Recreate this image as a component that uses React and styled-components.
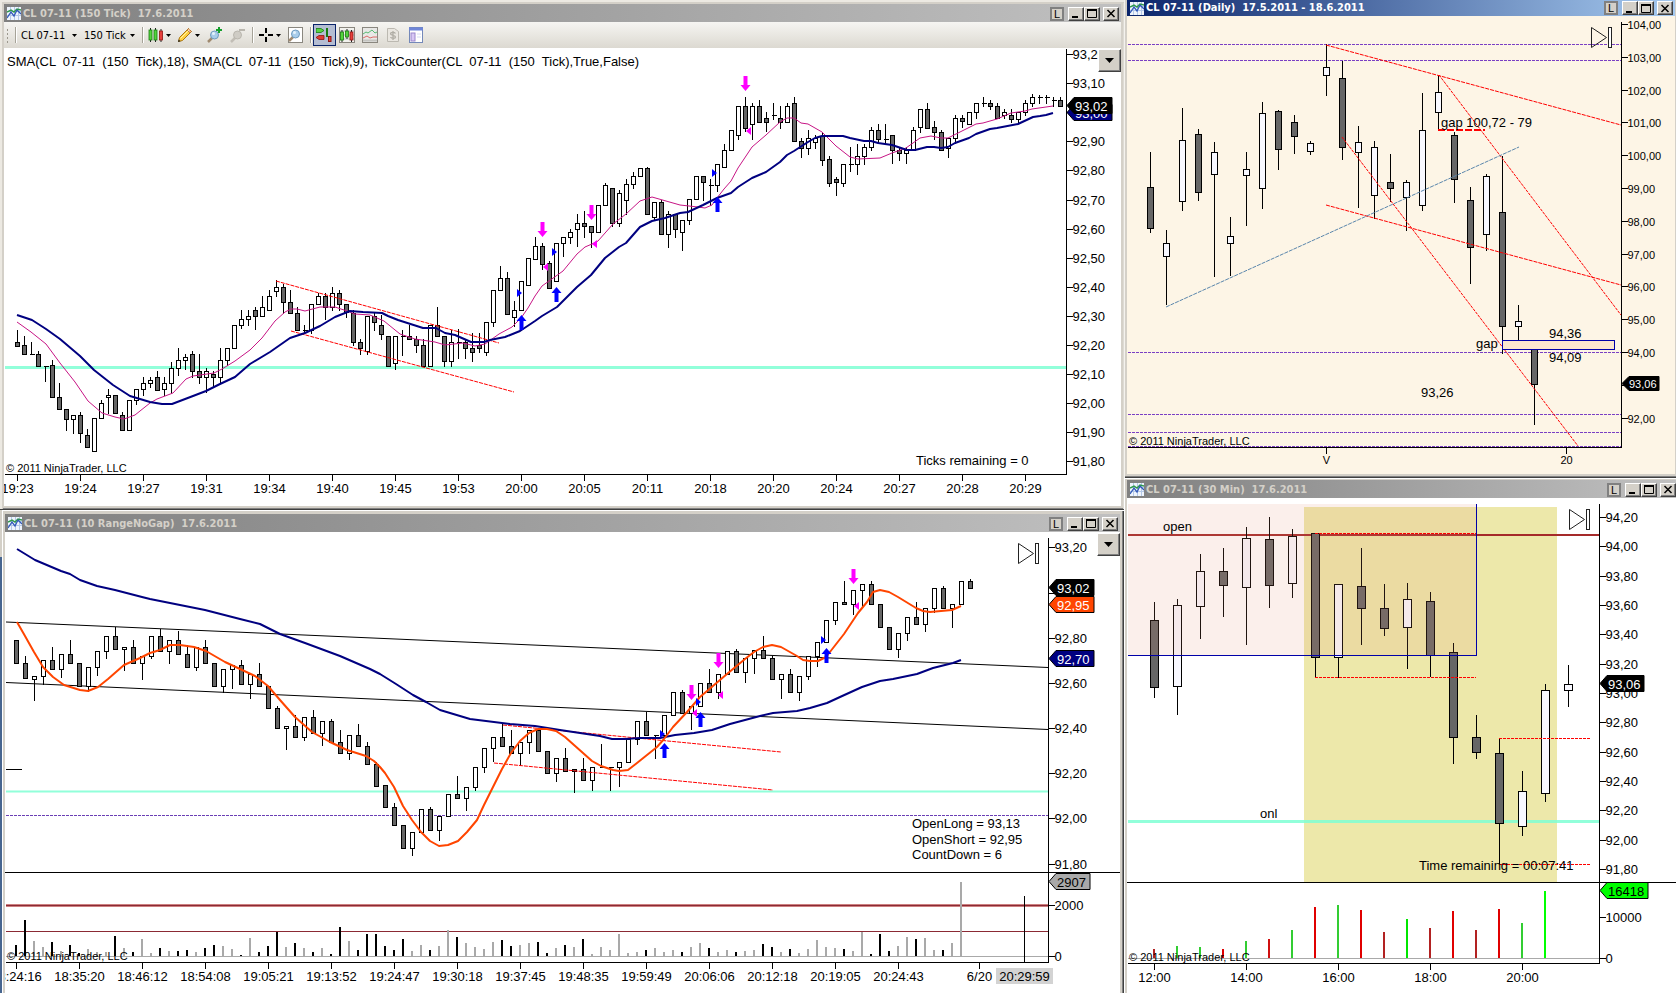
import React from "react";
import styled, { createGlobalStyle, css } from "styled-components";

const GlobalStyle = createGlobalStyle`
  * { box-sizing: border-box; }
  body { margin: 0; background: #d4d0c8; font-family: "DejaVu Sans Condensed", "Noto Sans", sans-serif; font-size: 11px; color: #000; }
  button, select { font: inherit; color: #000; margin: 0; }
`;

/* ---------- window chrome ---------- */

const Desktop = styled.main`
  display: grid;
  grid-template-columns: 1124fr 552fr;
  align-items: start;
  min-height: 100vh;
`;

const Column = styled.div`
  display: flex;
  flex-direction: column;
  min-width: 0;
`;

const Backdrop = styled.div`
  padding-left: 2px;
  background: linear-gradient(#d4d0c8 47px, #47658f 47px);
`;

const Frame = styled.section`
  display: flex;
  flex-direction: column;
  background: #d4d0c8;
  ${({ $kind }) =>
    ({
      tick: css`padding: 4px 3px 4px 4px; box-shadow: inset 0 -1px #404040, inset 2px 2px #ece9e2, inset 3px 3px #d4d0c8, inset -1px 0 #dedbd4, inset 0 -2px #808080;`,
      range: css`padding: 4px 4px 0 3px; box-shadow: inset 1px 1px #ffffff, inset -1px 0 #404040, inset -2px 0 #808080;`,
      daily: css`padding: 0 1px 4px 3px; box-shadow: inset 1px 0 #f4f2ee, inset 0 -1px #404040, inset 0 -2px #808080;`,
      minute: css`padding: 2px 0 0 3px; box-shadow: inset 1px 1px #ffffff;`,
    })[$kind]}
`;

const TitleBar = styled.header`
  display: flex;
  align-items: center;
  gap: 2px;
  height: ${({ $short }) => ($short ? 16 : 18)}px;
  padding: ${({ $short }) => ($short ? 0 : 1)}px ${({ $end }) => $end}px 0 3px;
  color: ${({ $active }) => ($active ? "#fff" : "#d4d0c8")};
  background: ${({ $active }) =>
    $active
      ? "linear-gradient(90deg, #0a246a, #a6caf0)"
      : "linear-gradient(90deg, #808080, #c0c0c0)"};
`;

const Title = styled.h2`
  flex: 1;
  margin: 0;
  font-size: 11px;
  line-height: 16px;
  font-weight: 700;
  white-space: pre;
  overflow: hidden;
`;

const CaptionButtons = styled.div`
  display: flex;
  align-items: center;
`;

const CaptionButton = styled.button`
  display: grid;
  place-items: center;
  width: ${({ $small }) => ($small ? 14 : 16)}px;
  height: 14px;
  padding: 0;
  margin-left: ${({ $gap }) => $gap || 0}px;
  border: 1px solid;
  border-color: #fff #404040 #404040 #fff;
  background: #d4d0c8;
  box-shadow: inset -1px -1px #808080;
  ${({ $small }) =>
    $small &&
    css`
      border: 2px solid #808080;
      box-shadow: none;
      font: 11px/10px "Liberation Sans", sans-serif;
    `}
`;

const ChartArea = styled.div`
  position: relative;
`;

const ChartSvg = styled.svg`
  display: block;
  width: 100%;
  height: auto;
  background: ${({ $tint }) => $tint || "#fff"};
`;

const MenuButton = styled.button`
  position: absolute;
  top: 1px;
  right: 0;
  display: grid;
  place-items: center;
  width: 23px;
  height: 23px;
  padding: 0;
  border: 1px solid;
  border-color: #fff #404040 #404040 #fff;
  background: #d4d0c8;
  box-shadow: inset -1px -1px #808080;
`;

/* ---------- toolbar ---------- */

const Toolbar = styled.div`
  display: flex;
  align-items: center;
  height: 26px;
  background: linear-gradient(#f6f5f2, #dcd9d1);
`;

const Grip = styled.span`
  width: 8px;
  height: 15px;
  background: radial-gradient(circle, #9c988e 1px, transparent 1px) 2px 0 / 3px 4px repeat-y;
`;

const Separator = styled.span`
  width: 6px;
  height: 16px;
  border-left: 3px solid transparent;
  background: linear-gradient(90deg, #a6a398 1px, #fff 1px, #fff 2px, transparent 2px) no-repeat padding-box;
`;

const Picker = styled.label`
  display: flex;
  align-items: center;
  width: ${({ $wide }) => ($wide ? 63 : 58)}px;
  padding: 0 4px 0 3px;
`;

const PickerSelect = styled.select`
  flex: 1;
  min-width: 0;
  padding: 0;
  border: 0;
  outline: 0;
  background: transparent;
  appearance: none;
`;

const ToolButton = styled.button`
  display: flex;
  align-items: center;
  gap: 2px;
  width: ${({ $menu }) => ($menu ? 29 : 23)}px;
  height: 22px;
  padding: 0 0 0 2px;
  border: 1px solid ${({ $pressed }) => ($pressed ? "#0a246a" : "transparent")};
  background: ${({ $pressed }) => ($pressed ? "#b4bdd2" : "transparent")};
`;

const Caret = () => (
  <svg width="5" height="3" viewBox="0 0 5 3" aria-hidden="true">
    <path d="M0 0h5L2.500 3z" fill="#000" />
  </svg>
);

const Icon = ({ children }) => (
  <svg width="16" height="16" viewBox="0 0 16 16" aria-hidden="true">
    {children}
  </svg>
);

const Lens = ({ faded, x = 0, y = 0 }) => (
  <g transform={`translate(${x} ${y})`}>
    <path d="M2 14l5-5" stroke={faded ? "#c2beb6" : "#a08a70"} strokeWidth="2.500" />
    <circle cx="8.500" cy="7" r="4" fill={faded ? "#cfccc5" : "#a9cdea"} stroke={faded ? "#b9b6ae" : "#6f9cc0"} />
    {!faded && <circle cx="7.500" cy="5.500" r="1.500" fill="#e4f2fc" />}
  </g>
);

const Bar = ({ x, y, h, up }) => (
  <g>
    <path d={`M${x + 1.5} ${y - 2}v${h + 4}`} stroke="#222" />
    <rect x={x} y={y} width="3" height={h} fill={up ? "#52d43c" : "#e8403c"} stroke={up ? "#187a10" : "#8e1512"} strokeWidth="0.800" />
  </g>
);

const StyleIcon = () => (
  <Icon>
    <Bar x={1} y={3} h={10} up />
    <Bar x={6} y={3} h={10} up />
    <Bar x={11.5} y={4} h={9} />
  </Icon>
);

const PencilIcon = () => (
  <Icon>
    <path d="M1.500 14.500l1-4L11.500 1.500l3 3L5.500 13.500z" fill="#ffd040" stroke="#a97512" />
    <path d="M11.500 1.500l3 3-1.500 1.500-3-3z" fill="#f0a8a0" stroke="#a97512" strokeWidth="0.700" />
    <path d="M3.500 11.500l9-9" stroke="#fff2a8" />
    <path d="M1 15l2.500-.7-1.800-1.800z" fill="#222" />
  </Icon>
);

const ZoomInIcon = () => (
  <Icon>
    <Lens y={1} />
    <path d="M13 0v6M10 3h6" stroke="#14a02c" strokeWidth="2" />
  </Icon>
);

const ZoomOutIcon = () => (
  <Icon>
    <Lens y={1} faded />
    <path d="M10 3h6" stroke="#b9b6ae" strokeWidth="2" />
  </Icon>
);

const CrosshairIcon = () => (
  <Icon>
    <path d="M8 1v5M8 10v5M1 8h5M10 8h5" stroke="#000" strokeWidth="2" />
  </Icon>
);

const PageIcon = () => (
  <Icon>
    <rect x="1.500" y=".5" width="14" height="15" fill="#fff" stroke="#8a877f" />
    <Lens />
  </Icon>
);

const TraderIcon = () => (
  <Icon>
    <path d="M0 1.500h5l3 2-3 2H0z" fill="#58d444" stroke="#187a10" strokeWidth="0.800" />
    <path d="M8 8.500H3l-3 2 3 2h5z" fill="#e03c34" stroke="#8e1512" strokeWidth="0.800" />
    <path d="M11 1v9" stroke="#187a10" strokeWidth="2" />
    <rect x="12.500" y="9.500" width="2.500" height="5" fill="#e8403c" stroke="#8e1512" />
  </Icon>
);

const DataIcon = () => (
  <Icon>
    <rect x=".5" y=".5" width="15" height="15" fill="#f2f2ee" stroke="#8a877f" />
    <path d="M1 4h14M1 8h14M1 12h14" stroke="#9aa0a8" strokeWidth="0.700" />
    <Bar x={1.5} y={5} h={8} up />
    <Bar x={6.5} y={4} h={6} up />
    <Bar x={11} y={5} h={8} />
  </Icon>
);

const IndicatorIcon = () => (
  <Icon>
    <rect x=".5" y=".5" width="15" height="15" fill="#e8e8e6" stroke="#8a877f" />
    <path d="M1 7l3-2 2 1 4-3 3 3 2-1" fill="none" stroke="#35ad55" strokeWidth="0.800" />
    <path d="M1 11l4-2 3 2 3-1 4 0" fill="none" stroke="#d64a48" strokeWidth="0.800" />
    <path d="M1 13.500h14" stroke="#c4c4c0" strokeWidth="2" />
  </Icon>
);

const StrategyIcon = () => (
  <Icon>
    <path d="M2.500 1.500h7l4 3v10h-11z" fill="#e9e6e0" stroke="#bcb9b1" />
    <path d="M10.500 6.500c-1-1.500-5-1.500-5 .3 0 2 5 1 5 3.200 0 1.800-4 1.800-5 .2M8 4v9" fill="none" stroke="#b0ada5" strokeWidth="1.300" />
  </Icon>
);

const PropertiesIcon = () => (
  <Icon>
    <rect x="1.500" y=".5" width="13" height="15" fill="#fff" stroke="#7488b8" />
    <path d="M1 2h14" stroke="#6f86d8" strokeWidth="3" />
    <rect x="3" y="6" width="4" height="8" fill="#d8c8f4" stroke="#9a86cc" />
    <path d="M9 7h4M9 10h4" stroke="#d4dcf2" />
  </Icon>
);

const ChartToolbar = () => (
  <Toolbar role="toolbar" aria-label="Chart tools">
    <Grip />
    <Separator />
    <Picker $wide>
      <PickerSelect aria-label="Instrument">
        <option>CL 07-11</option>
      </PickerSelect>
      <Caret />
    </Picker>
    <Picker>
      <PickerSelect aria-label="Period">
        <option>150 Tick</option>
      </PickerSelect>
      <Caret />
    </Picker>
    <Separator />
    <ToolButton $menu aria-label="Chart style"><StyleIcon /><Caret /></ToolButton>
    <ToolButton $menu aria-label="Drawing tools"><PencilIcon /><Caret /></ToolButton>
    <ToolButton aria-label="Zoom in"><ZoomInIcon /></ToolButton>
    <ToolButton aria-label="Zoom out" disabled><ZoomOutIcon /></ToolButton>
    <Separator />
    <ToolButton $menu aria-label="Crosshair"><CrosshairIcon /><Caret /></ToolButton>
    <ToolButton aria-label="Zoom frame"><PageIcon /></ToolButton>
    <Separator />
    <ToolButton $pressed aria-label="Chart trader"><TraderIcon /></ToolButton>
    <ToolButton aria-label="Data series"><DataIcon /></ToolButton>
    <ToolButton aria-label="Indicators"><IndicatorIcon /></ToolButton>
    <ToolButton aria-label="Strategies" disabled><StrategyIcon /></ToolButton>
    <ToolButton aria-label="Properties"><PropertiesIcon /></ToolButton>
  </Toolbar>
);

const ChartMark = () => (
  <svg width="14" height="13" viewBox="0 0 14 13" aria-hidden="true">
    <rect width="14" height="13" fill="#eef4fc" />
    <path d="M0 4.500h14M0 8.500h14M3.500 0v13M7.500 0v13M11.500 0v13" stroke="#b4c8e8" />
    <path d="M0 5l4-2 3 2 3-3 4 1" fill="none" stroke="#2e9a4a" strokeWidth="1.500" />
    <path d="M0 11l4-6 3 4 3-6 4 4" fill="none" stroke="#3058b8" strokeWidth="1.300" />
  </svg>
);

const WindowTitle = ({ text, active, short, end = 4 }) => (
  <TitleBar $active={active} $short={short} $end={end}>
    <ChartMark />
    <Title>{text}</Title>
    <CaptionButtons>
      <CaptionButton $small aria-label="Link">L</CaptionButton>
      <CaptionButton $gap={4} aria-label="Minimize">
        <svg width="10" height="9"><path d="M1 8h6" stroke="#000" strokeWidth="2" /></svg>
      </CaptionButton>
      <CaptionButton aria-label="Maximize">
        <svg width="10" height="9"><path d="M.5 1h9M.5 0v8.500h9V0" fill="none" stroke="#000" /><path d="M0 1h10" stroke="#000" strokeWidth="2" /></svg>
      </CaptionButton>
      <CaptionButton $gap={3} aria-label="Close">
        <svg width="10" height="9"><path d="M1.500 1l7 7M8.500 1l-7 7" stroke="#000" strokeWidth="1.500" /></svg>
      </CaptionButton>
    </CaptionButtons>
  </TitleBar>
);

/* ---------- chart primitives ---------- */

const ChartText = styled.text`
  font-family: "Liberation Sans", Arial, sans-serif;
  font-size: ${({ $small }) => ($small ? 11 : 13)}px;
  fill: ${({ $color }) => $color || "#000"};
  white-space: pre;
`;

const Crisp = styled.g`
  shape-rendering: crispEdges;
`;

const Dashed = styled.line`
  stroke: ${({ $color }) => $color || "#ff0000"};
  stroke-width: ${({ $weight }) => $weight || 1}px;
  stroke-dasharray: ${({ $dash }) => $dash || "4 1"};
`;

const LevelLine = styled.line`
  stroke: #7fffd4;
  stroke-width: ${({ $weight }) => $weight}px;
  opacity: 0.85;
`;

const Curve = styled.polyline`
  fill: none;
  stroke: ${({ $color }) => $color};
  stroke-width: ${({ $weight }) => $weight || 1}px;
  stroke-linejoin: round;
`;

// Each candle reads "kind high top bottom low"; kind is u (rising) or d (falling).
const Candles = ({ data, x0, step, half, hollow = "#fff" }) => (
  <Crisp stroke="#000">
    {data.trim().split(/\s*[;\n]\s*/).filter(Boolean).map((entry, i) => {
      const [kind, ...values] = entry.split(" ");
      const [high, top, bottom, low] = values.map(Number);
      const x = x0 + i * step;
      return (
        <g key={i}>
          <path d={`M${x} ${high}V${low + 1}`} />
          {top === bottom ? (
            <path d={`M${x - half} ${top + 0.5}h${half * 2 + 1}`} />
          ) : (
            <rect x={x - half} y={top + 0.5} width={half * 2} height={bottom - top} fill={kind === "d" ? "#666" : hollow} />
          )}
        </g>
      );
    })}
  </Crisp>
);

const Tag = ({ x, y, w, text, fill, color = "#fff", small }) => {
  const r = small ? 7 : 8;
  return (
    <g>
      <path d={`M${x} ${y}l7 -${r}h${w - 7}v${r * 2}h-${w - 7}z`} fill={fill} stroke="#000" />
      <ChartText $small={small} $color={color} x={x + (small ? 7 : 8)} y={y + (small ? 4 : 5)}>{text}</ChartText>
    </g>
  );
};

const SellArrow = ({ x, y }) => <path d={`M${x - 2} ${y}h4v9h3l-5 6-5-6h3z`} fill="#ff00ff" />;
const BuyArrow = ({ x, y }) => <path d={`M${x} ${y}l5 6h-3v9h-4v-9h-3z`} fill="#0000ff" />;
const EntryMark = ({ x, y }) => <path d={`M${x} ${y}l-5-4v8z`} fill="#0000ff" />;
const ExitMark = ({ x, y }) => <path d={`M${x} ${y}l5-4v8z`} fill="#ff00ff" />;

const Markers = ({ sells, buys, entries, exits }) => (
  <g>
    {sells.map(([x, y]) => <SellArrow key={x} x={x} y={y} />)}
    {buys.map(([x, y]) => <BuyArrow key={x} x={x} y={y} />)}
    {entries.map(([x, y]) => <EntryMark key={x} x={x} y={y} />)}
    {exits.map(([x, y]) => <ExitMark key={x} x={x} y={y} />)}
  </g>
);

const PriceAxis = ({ x, top, bottom, labels, small }) => (
  <g>
    <Crisp stroke="#000">
      <path d={`M${x} ${top}V${bottom}`} />
      {labels.map(([, y]) => <path key={y} d={`M${x} ${y}h6`} />)}
    </Crisp>
    {labels.map(([label, y]) => (
      <ChartText key={y} $small={small} x={x + 6} y={y + 4}>{label}</ChartText>
    ))}
  </g>
);

const TimeAxis = ({ y, from, to, labels, x0, step, small, drop = 18 }) => (
  <g>
    <Crisp stroke="#000">
      <path d={`M${from} ${y}H${to}`} />
      {labels.map((label, i) => <path key={label} d={`M${x0 + i * step} ${y}v6`} />)}
    </Crisp>
    {labels.map((label, i) => (
      <ChartText key={label} $small={small} textAnchor="middle" x={x0 + i * step} y={y + drop}>{label}</ChartText>
    ))}
  </g>
);

const SkipIcon = ({ x, y }) => (
  <g fill="none" stroke="#222">
    <path d={`M${x} ${y}v20l15-10z`} />
    <rect x={x + 17} y={y} width="3" height="20" fill="#fff" />
  </g>
);

const Copyright = ({ x, y }) => <ChartText $small x={x} y={y}>© 2011 NinjaTrader, LLC</ChartText>;

const scale = (labels, start, step) => labels.map((label, i) => [label, Math.round(start + i * step) + 0.5]);

/* ---------- 150 tick chart ---------- */

const TICK_CANDLES = `
d 330 342 346 346;d 336 345 354 354;u 342 354 354 354;d 351 354 366 366;u 366 366 366 381;d 360 365 397 397;d 383 397 409 409;d 409 409 419 430
u 415 415 419 433;d 412 415 433 442;d 429 435 447 447;u 418 418 451 451;u 400 403 418 418;u 389 395 397 413;d 395 395 413 413;d 412 415 430 430
u 400 400 430 430;u 389 389 400 404;u 377 383 389 395;u 377 380 383 387;d 371 377 390 390;u 377 383 389 395;u 362 368 383 393;u 348 360 368 375
u 354 357 360 369;d 351 354 371 377;d 354 371 377 383;u 368 371 377 392;d 371 374 377 387;u 348 360 377 383;u 348 348 360 365;u 325 325 348 348
u 310 319 325 328;u 310 316 319 325;d 307 310 316 329;u 296 307 316 316;u 290 296 310 310;u 280 287 291 296;d 284 287 302 313;d 290 302 313 313
d 307 313 330 330;u 325 330 330 333;u 304 304 330 333;u 293 296 304 304;d 293 296 307 319;u 287 293 307 310;d 290 293 304 310;d 304 304 312 317
d 310 313 342 345;d 339 342 348 354;u 316 316 351 354;d 313 316 322 330;d 315 325 334 339;d 336 336 366 366;u 336 336 363 369;u 330 336 336 355
d 325 336 339 339;d 336 339 345 352;d 339 345 366 366;u 325 325 366 366;d 307 325 336 336;d 336 336 361 366;u 330 342 361 366;u 329 342 342 358
d 339 342 348 358;d 333 348 352 361;d 333 345 348 352;u 322 322 352 355;u 290 290 322 326;u 266 278 290 290;d 272 278 314 314;u 301 310 317 326
u 281 281 310 310;u 258 258 285 285;u 237 246 259 259;d 243 246 264 269;d 261 263 288 288;u 243 243 281 281;u 237 237 243 256;u 229 232 237 243
u 214 223 229 246;d 211 223 226 237;d 226 226 232 247;u 205 205 232 232;u 183 185 205 205;d 188 188 223 226;u 190 193 223 226;u 179 184 200 214
u 172 176 184 188;u 168 168 176 176;d 167 168 214 214;u 202 202 217 220;d 200 202 234 234;u 211 214 234 247;d 214 214 229 237;u 220 220 232 250
u 199 199 220 224;u 176 176 199 199;d 176 176 182 200;u 179 185 185 205;u 164 164 185 191;u 144 150 167 167;u 130 130 150 150;u 106 106 135 139
d 97 106 128 131;u 103 106 124 139;d 100 106 122 122;d 112 118 122 131;u 103 115 115 119;d 106 118 122 128;u 103 106 122 122;d 97 103 141 141
d 138 141 148 157;u 130 138 148 154;u 135 138 142 148;d 133 136 160 165;d 156 159 183 186;d 177 179 182 195;u 164 164 183 186;u 147 164 164 171
u 144 156 164 174;u 144 147 156 164;u 127 130 147 150;d 124 130 139 143;u 124 139 139 144;d 135 135 150 163;d 147 150 153 160;u 147 150 153 163
u 127 130 150 150;u 109 109 127 132;d 103 109 128 128;d 121 127 132 139;d 130 132 150 150;u 138 138 148 157;u 115 118 138 143;d 115 118 121 127
u 112 112 124 124;u 103 103 112 118;u 97 103 103 106;d 100 103 106 109;d 103 106 118 118;u 109 112 115 118;d 109 115 119 122;u 112 112 119 122
u 100 103 112 115;u 94 97 103 106;u 95 97 97 103;u 95 97 97 103;u 97 100 100 106;d 97 100 106 106`;

const TICK_SMA_SLOW =
  "17,315 32,320 46,329 60,339 80,356 94,370 113,385 130,396 150,402 162,404 172,404 193,396 206,391 220,384 235,377 250,364 270,352 290,338 305,333 320,326 335,317 350,311 363,312 382,313 388,316 398,320 423,328 436,328 445,333 455,335 471,342 484,342 490,340 505,337 520,331 535,321 542,316 557,307 577,287 591,275 605,258 619,247 626,243 640,227 652,221 665,218 680,213 688,212 703,205 717,198 731,193 738,187 752,178 766,172 780,162 787,155 794,151 808,142 815,138 822,136 843,136 850,138 864,141 871,141 878,143 892,145 907,150 915,150 927,147 934,147 941,148 948,147 955,143 969,138 976,134 990,129 997,128 1018,124 1033,117 1040,116 1046,115 1053,113";

const TICK_SMA_FAST =
  "17,322 31,332 46,344 60,363 75,382 88,401 102,413 115,417 124,419 135,415 150,403 157,399 173,393 186,379 193,376 200,375 214,373 222,369 235,361 250,350 262,338 275,321 285,312 291,309 297,309 305,311 320,307 335,307 347,311 355,314 370,315 384,321 400,334 415,339 435,342 445,345 463,343 475,346 485,344 499,334 512,327 521,318 528,308 535,296 542,286 556,276 563,271 577,254 585,247 592,244 598,241 613,224 626,214 640,201 652,197 666,201 680,205 698,207 705,208 712,205 717,198 724,189 731,181 738,168 752,147 766,135 780,122 787,118 794,118 801,123 808,124 822,132 836,146 850,157 858,159 880,158 892,153 906,148 920,138 931,136 941,138 948,138 962,131 976,124 983,123 997,119 1011,113 1025,111 1032,109 1053,106";

const TickChart = () => (
  <ChartSvg viewBox="4 48 1117 458" role="img" aria-label="CL 07-11 150 tick chart">
    <LevelLine $weight={3} x1="5" x2="1066" y1="367.500" y2="367.500" />
    <Candles data={TICK_CANDLES} x0={17.5} step={7} half={2} />
    <Dashed x1="276" y1="281" x2="499" y2="343" />
    <Dashed x1="291" y1="331" x2="514" y2="392" />
    <Curve $color="#c71585" points={TICK_SMA_FAST} />
    <Curve $color="#000080" $weight={2} points={TICK_SMA_SLOW} />
    <Markers
      sells={[[542.5, 222], [591.5, 205], [745.5, 76]]}
      buys={[[521.5, 315], [556.5, 287], [717.5, 197]]}
      entries={[[522, 293], [557, 252], [717, 173]]}
      exits={[[543, 267], [592, 244], [746, 131]]}
    />
    <ChartText x="7" y="66">{"SMA(CL  07-11  (150  Tick),18),"}</ChartText>
    <ChartText x="193" y="66">{"SMA(CL  07-11  (150  Tick),9),"}</ChartText>
    <ChartText x="372" y="66">{"TickCounter(CL  07-11  (150  Tick),True,False)"}</ChartText>
    <ChartText x="916" y="465">Ticks remaining = 0</ChartText>
    <Copyright x={6} y={472} />
    <PriceAxis
      x={1066.5}
      top={49}
      bottom={475}
      labels={scale(["93,20", "93,10", "93,00", "92,90", "92,80", "92,70", "92,60", "92,50", "92,40", "92,30", "92,20", "92,10", "92,00", "91,90", "91,80"], 54, 29.1)}
    />
    <Tag x={1067} y={112.5} w={45} text="93,00" fill="#000080" />
    <Tag x={1067} y={105.5} w={45} text="93,02" fill="#000" />
    <TimeAxis
      y={474.5}
      from={5}
      to={1067}
      x0={17.5}
      step={63}
      labels={["19:23", "19:24", "19:27", "19:31", "19:34", "19:40", "19:45", "19:53", "20:00", "20:05", "20:11", "20:18", "20:20", "20:24", "20:27", "20:28", "20:29"]}
    />
  </ChartSvg>
);

/* ---------- 10 range chart ---------- */

const RANGE_CANDLES = `
d 640 640 663 663;d 656 663 678 678;u 676 676 679 700;u 660 660 676 684;d 647 660 669 669;u 654 654 669 677;d 640 654 663 663;d 663 663 686 686
u 667 667 686 691;u 651 651 667 675;u 636 636 651 658;d 627 636 649 649;u 647 647 649 670;d 640 647 663 663;u 656 656 663 679;u 636 636 656 658
d 629 636 651 651;u 640 640 651 663;d 631 640 654 654;d 645 654 667 667;u 647 647 667 670;d 640 647 663 663;d 663 663 686 686;u 669 669 686 692
u 665 665 669 688;d 660 665 684 684;u 674 674 684 698;d 663 674 686 686;d 686 686 708 708;d 706 708 728 728;u 726 726 728 749;d 715 726 737 737
u 717 717 737 740;d 710 717 733 733;u 721 721 733 745;d 719 721 742 742;d 730 742 753 753;u 735 735 753 759;d 724 735 746 746;d 742 746 764 764
d 762 764 786 786;d 785 785 807 807;d 803 807 825 825;d 825 825 848 848;u 832 832 848 855;u 809 809 832 832;d 807 809 830 830;u 816 816 830 840
u 794 794 816 816;d 776 794 798 798;u 787 787 798 810;u 767 767 787 790;u 748 748 767 772;u 737 737 748 761;d 724 737 746 746;d 730 746 753 753
u 742 742 753 765;u 730 730 742 753;d 728 730 751 751;d 751 751 773 773;u 758 758 773 781;d 748 758 771 771;d 769 769 771 792;d 758 769 780 780
u 767 767 780 790;u 744 767 767 767;u 767 767 767 790;u 762 762 767 786;u 739 739 762 762;u 721 721 739 744;d 712 721 735 735;u 735 735 735 758
u 715 715 735 737;u 692 692 715 715;d 690 692 713 713;u 706 706 713 729;u 683 683 706 706;d 669 683 692 692;u 674 674 692 698;u 651 651 674 674
d 649 651 672 672;u 658 658 672 682;u 650 650 658 673;d 636 650 658 658;d 656 658 679 679;u 674 674 679 698;d 669 674 692 692;u 676 676 692 700
u 656 656 676 679;u 642 642 656 666;u 620 620 642 642;u 602 602 620 624;d 581 602 604 604;u 590 590 604 614;u 584 584 590 607;d 581 584 604 604
d 604 604 627 627;d 627 627 649 649;u 633 633 649 657;u 617 617 633 640;d 602 617 624 624;u 608 608 624 631;u 588 588 608 612;d 586 588 608 608
u 604 604 608 627;u 581 581 604 604;d 579 581 588 588`;

const RANGE_SLOW =
  "17,549 35,560 61,571 70,574 80,580 97,586 115,590 142,597 150,599 205,610 240,619 260,624 280,634 305,643 340,656 370,669 380,674 396,684 413,695 426,702 440,710 470,719 510,724 535,726 560,730 600,736 612,739 625,739 640,738 660,738 675,735 694,733 712,730 730,724 745,720 760,716 773,713 797,711 810,708 827,703 840,697 862,687 880,681 893,679 917,674 933,668 953,663 961,660";

const RANGE_FAST =
  "17,622 25,636 34,652 43,667 53,677 64,685 80,690 88,691 98,687 108,679 124,665 140,658 150,653 160,650 170,645 180,645 194,647 206,651 225,662 240,669 255,676 268,686 280,700 295,717 312,732 330,742 347,750 366,756 374,761 380,767 385,773 394,787 403,806 412,820 421,832 430,841 439,846 448,845 458,841 467,832 477,820 484,805 493,787 502,769 511,753 520,741 529,733 538,729 547,729 556,731 565,737 574,745 592,761 601,766 613,770 619,771 628,770 637,763 657,747 664,739 673,727 687,712 700,697 727,674 745,659 754,652 763,647 772,645 781,647 797,656 803,660 810,661 818,661 826,657 844,634 858,613 867,602 873,592 880,590 889,592 898,597 916,608 923,611 930,612 952,610 961,606";

// Bar colour (k black, g grey) followed by the bar height.
const RANGE_VOLUME =
  "k11 k36 g15 g9 k14 g5 k11 k3 g7 g4 g4 k20 g8 k4 g17 g3 k8 g5 k5 k6 g4 k8 k11 g10 g7 k1 g18 k4 k10 k24 g9 k13 g8 k4 g8 k2 k29 g15 k6 k22 k22 k10 k6 k17 g5 g11 k6 g10 g26 k19 g13 g9 g7 g14 k16 k10 g11 g13 k14 k3 g8 k11 g9 k17 g2 g9 g6 g22 g3 g4 k6 g8 g4 g6 k4 g9 g13 k8 g4 g6 k4 g5 g6 k12 k9 g4 k7 g3 g7 g16 g9 g8 k7 g5 g24 k2 k22 k5 g10 g19 k17 g18 g6 k6 g13 g74";

const RangeChart = () => (
  <ChartSvg viewBox="5 532 1115 461" role="img" aria-label="CL 07-11 10 range chart">
    <LevelLine $weight={2} x1="6" x2="1048" y1="791.500" y2="791.500" />
    <line x1="6" y1="622" x2="1048" y2="667.500" stroke="#000" />
    <line x1="6" y1="682.500" x2="1048" y2="729.500" stroke="#000" />
    <Crisp>
      <Dashed $color="#6a3fb4" $dash="3 1" x1="6" y1="815.500" x2="1048" y2="815.500" />
      <path d="M6 769.500h16" stroke="#000" />
    </Crisp>
    <Candles data={RANGE_CANDLES} x0={16.5} step={9} half={2} />
    <Dashed x1="503" y1="725" x2="781" y2="752" />
    <Dashed x1="494" y1="763" x2="773" y2="790" />
    <Curve $color="#000080" $weight={2} points={RANGE_SLOW} />
    <Curve $color="#ff4500" $weight={2} points={RANGE_FAST} />
    <Markers
      sells={[[691.5, 685], [718.5, 653], [853.5, 569]]}
      buys={[[664.5, 743], [700.5, 712], [826.5, 648]]}
      entries={[[665, 734], [701, 702], [826, 640]]}
      exits={[[692, 713], [718, 695], [854, 606]]}
    />
    <SkipIcon x={1018.5} y={543.5} />
    <ChartText x="912" y="828">OpenLong = 93,13</ChartText>
    <ChartText x="912" y="844">OpenShort = 92,95</ChartText>
    <ChartText x="912" y="859">CountDown = 6</ChartText>

    <Crisp>
      <path d="M5 872.500H1120" stroke="#000" />
      <path d="M6 905.500H1048" stroke="#cd8080" strokeWidth="3" />
      <path d="M6 905.500H1048M6 931.500H1048" stroke="#8b2a34" />
      <path d="M6 956.500H1048" stroke="#a9a9a9" />
      {RANGE_VOLUME.split(" ").map((bar, i) => (
        <rect key={i} x={15 + i * 9} y={956 - Number(bar.slice(1))} width="2" height={Number(bar.slice(1))} fill={bar[0] === "k" ? "#000" : "#a9a9a9"} />
      ))}
      <path d="M1024.500 896V962" stroke="#000" />
    </Crisp>
    <Copyright x={7} y={960} />
    <PriceAxis
      x={1048.5}
      top={538}
      bottom={963}
      labels={[["93,20", 547.5], ["", 593.5], ["92,80", 638.5], ["92,60", 683.5], ["92,40", 728.5], ["92,20", 773.5], ["92,00", 818.5], ["91,80", 864.5], ["2000", 905.5], ["0", 956.5]]}
    />
    <Tag x={1049} y={587.5} w={45} text="93,02" fill="#000" />
    <Tag x={1049} y={604.5} w={45} text="92,95" fill="#ff4500" />
    <Tag x={1049} y={658.5} w={45} text="92,70" fill="#000080" />
    <Tag x={1049} y={881.5} w={41} text="2907" fill="#a9a9a9" color="#000" />
    <TimeAxis
      y={962.5}
      from={6}
      to={1049}
      x0={16.5}
      step={63}
      labels={["18:24:16", "18:35:20", "18:46:12", "18:54:08", "19:05:21", "19:13:52", "19:24:47", "19:30:18", "19:37:45", "19:48:35", "19:59:49", "20:06:06", "20:12:18", "20:19:05", "20:24:43"]}
    />
    <TimeAxis y={962.5} from={979} to={980} x0={979.5} step={0} labels={["6/20"]} />
    <rect x="996" y="968" width="57" height="16" fill="#d3d3d3" />
    <ChartText textAnchor="middle" x="1024.500" y="981">20:29:59</ChartText>
  </ChartSvg>
);

/* ---------- daily chart ---------- */

const DAILY_CANDLES = `
d 152 187 228 232;u 230 243 256 304;u 108 140 201 210;d 129 134 192 200;u 142 152 174 276;u 217 236 243 275;u 152 169 175 225;u 102 113 188 208
d 110 111 149 169;d 115 122 136 153;u 141 143 151 154;u 44 67 75 95;d 61 78 147 159;u 126 142 152 207;u 141 147 195 218;d 154 182 188 201
u 180 182 197 230;u 93 130 205 210;u 75 92 112 130;d 132 135 179 202;d 187 200 247 283;u 174 176 234 250;d 156 212 326 353;u 305 321 326 340
d 349 349 384 424`;

const DailyChart = () => (
  <ChartSvg $tint="#fdf5e6" viewBox="1127 16 548 458" role="img" aria-label="CL 07-11 daily chart">
    <Crisp>
      {[44, 60, 352, 414, 432, 446].map((y) => (
        <Dashed key={y} $color="#7a3fc4" $dash="3 1" x1="1128" x2="1621" y1={y + 0.5} y2={y + 0.5} />
      ))}
    </Crisp>
    <SkipIcon x={1591.5} y={27.5} />
    <Candles data={DAILY_CANDLES} x0={1150.5} step={16} half={3} hollow="#f8f8ff" />
    <Dashed x1="1326" y1="45" x2="1621" y2="125" />
    <Dashed x1="1439" y1="75" x2="1621" y2="315" $dash="3 1" />
    <Dashed x1="1326" y1="205" x2="1621" y2="285" />
    <Dashed x1="1342" y1="137" x2="1578" y2="446" $dash="3 1" />
    <Dashed $color="#5a86ac" x1="1166" y1="307" x2="1519" y2="147" />
    <Dashed $weight={2} $dash="7 2" x1="1438" y1="130" x2="1485" y2="130" />
    <Crisp>
      <rect x="1502.500" y="340.500" width="112" height="9" fill="#fbe6cf" stroke="#0000a8" />
    </Crisp>
    <ChartText x="1441" y="127">gap 100,72 - 79</ChartText>
    <ChartText x="1549" y="338">94,36</ChartText>
    <ChartText x="1549" y="362">94,09</ChartText>
    <ChartText x="1476" y="348">gap</ChartText>
    <ChartText x="1421" y="397">93,26</ChartText>
    <Copyright x={1129} y={445} />
    <PriceAxis
      small
      x={1621.5}
      top={22}
      bottom={448}
      labels={scale(["104,00", "103,00", "102,00", "101,00", "100,00", "99,00", "98,00", "97,00", "96,00", "95,00", "94,00", "", "92,00"], 24, 32.8)}
    />
    <Tag small x={1622} y={383.500} w={37} text="93,06" fill="#000" />
    <TimeAxis small y={447.5} from={1128} to={1622} x0={1326.5} step={240} drop={16} labels={["V", "20"]} />
  </ChartSvg>
);

/* ---------- 30 minute chart ---------- */

const MINUTE_CANDLES = `
d 602 620 687 697;u 599 605 686 714;u 554 571 606 638;d 548 571 585 616;u 527 538 587 644;d 517 539 585 607;u 529 536 583 597;d 533 533 657 677
u 584 584 657 677;d 548 586 608 644;d 584 608 628 635;u 583 599 627 668;d 592 601 655 676;d 643 652 737 763;d 715 737 752 758;d 738 753 823 864
u 771 791 826 835;u 684 690 793 801;u 665 684 690 706`;

const MINUTE_VOLUME = [
  ["#b22222", 9], ["#32cd32", 12], ["#32cd32", 11], ["#e00000", 9], ["#32cd32", 17], ["#d01010", 19],
  ["#32cd32", 28], ["#e00000", 51], ["#32cd32", 53], ["#e00000", 48], ["#b22222", 26], ["#00e600", 39],
  ["#b22222", 30], ["#e00000", 47], ["#b22222", 28], ["#e00000", 49], ["#32cd32", 35], ["#00ff00", 67],
];

const MinuteChart = () => (
  <ChartSvg viewBox="1127 498 549 495" role="img" aria-label="CL 07-11 30 minute chart">
    <Crisp>
      <rect x="1304" y="507" width="253" height="375" fill="#ede8aa" />
      <path d="M1128 534.500H1599" stroke="#a52a2a" strokeWidth="2" />
    </Crisp>
    <LevelLine $weight={3} x1="1128" x2="1599" y1="821.500" y2="821.500" />
    <SkipIcon x={1569.5} y={509.5} />
    <Candles data={MINUTE_CANDLES} x0={1154.5} step={23} half={4} hollow="#f8f8ff" />
    <Crisp>
      <rect x="1128" y="504" width="348" height="151" fill="rgb(230,145,110)" opacity="0.140" />
      <path d="M1128 655.500H1476.500V504" fill="none" stroke="#0000a8" />
      <Dashed x1="1315" y1="533.500" x2="1476" y2="533.500" $dash="3 1" />
      <Dashed x1="1315" y1="677.500" x2="1476" y2="677.500" $dash="3 1" />
      <Dashed x1="1499" y1="738.500" x2="1591" y2="738.500" $dash="3 1" />
      <Dashed x1="1499" y1="864.500" x2="1591" y2="864.500" $dash="3 1" />
      <path d="M1127 882.500H1676" stroke="#000" />
      <path d="M1128 958.500H1599" stroke="#a9a9a9" />
      {MINUTE_VOLUME.map(([color, height], i) => (
        <rect key={i} x={1153 + i * 23} y={958 - height} width="2" height={height} fill={color} />
      ))}
    </Crisp>
    <ChartText x="1163" y="531">open</ChartText>
    <ChartText x="1260" y="818">onl</ChartText>
    <ChartText x="1419" y="870">Time remaining = 00:07:41</ChartText>
    <Copyright x={1129} y={961} />
    <PriceAxis
      x={1599.5}
      top={504}
      bottom={963}
      labels={[
        ...scale(["94,20", "94,00", "93,80", "93,60", "93,40", "93,20", "93,00", "92,80", "92,60", "92,40", "92,20", "92,00", "91,80"], 517, 29.33),
        ["10000", 917.5],
        ["0", 958.5],
      ]}
    />
    <Tag x={1600} y={683.5} w={44} text="93,06" fill="#000" />
    <Tag x={1600} y={890.5} w={48} text="16418" fill="#00ff00" color="#000" />
    <TimeAxis y={963.5} from={1128} to={1600} x0={1154.5} step={92} labels={["12:00", "14:00", "16:00", "18:00", "20:00"]} />
  </ChartSvg>
);

/* ---------- page ---------- */

export default function App() {
  return (
    <>
      <GlobalStyle />
      <Desktop>
        <Column>
          <Frame $kind="tick">
            <WindowTitle text="CL 07-11 (150 Tick)  17.6.2011" end={2} />
            <ChartToolbar />
            <ChartArea>
              <TickChart />
              <MenuButton aria-label="Chart menu">
                <svg width="9" height="5"><path d="M0 0h9L4.500 5z" /></svg>
              </MenuButton>
            </ChartArea>
          </Frame>
          <Backdrop>
            <Frame $kind="range">
              <WindowTitle text="CL 07-11 (10 RangeNoGap)  17.6.2011" end={2} />
              <ChartArea>
                <RangeChart />
                <MenuButton aria-label="Chart menu">
                  <svg width="9" height="5"><path d="M0 0h9L4.500 5z" /></svg>
                </MenuButton>
              </ChartArea>
            </Frame>
          </Backdrop>
        </Column>
        <Column>
          <Frame $kind="daily">
            <WindowTitle active short text="CL 07-11 (Daily)  17.5.2011 - 18.6.2011" end={2} />
            <ChartArea>
              <DailyChart />
            </ChartArea>
          </Frame>
          <Frame $kind="minute">
            <WindowTitle text="CL 07-11 (30 Min)  17.6.2011" end={0} />
            <ChartArea>
              <MinuteChart />
            </ChartArea>
          </Frame>
        </Column>
      </Desktop>
    </>
  );
}
